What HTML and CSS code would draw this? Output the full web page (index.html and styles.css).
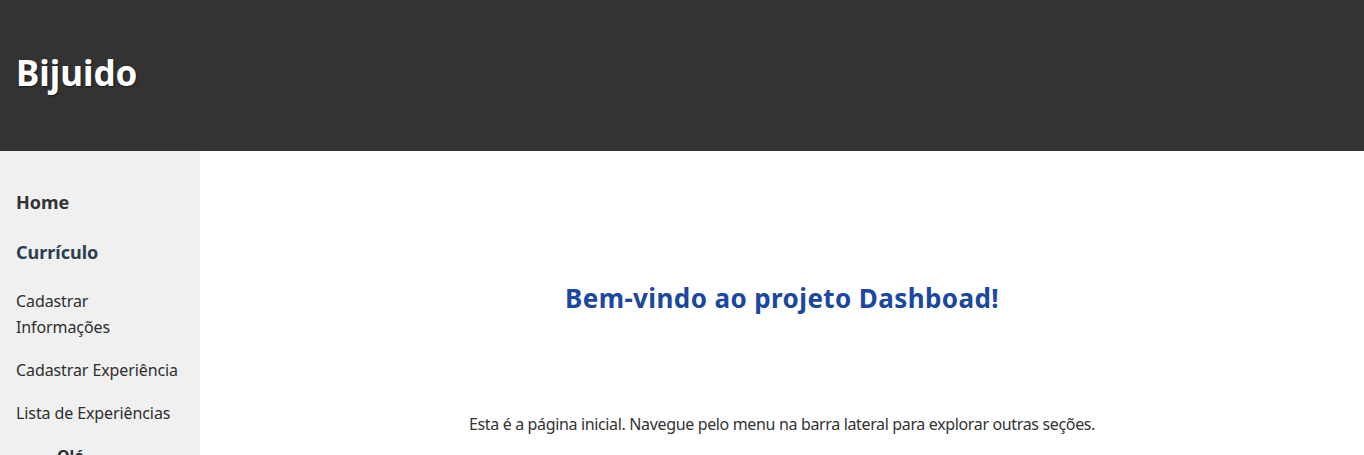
FILE: index.html
```html
<!DOCTYPE html>
<html lang="pt-BR">
<head>
<meta charset="utf-8">
<title>Bijuido</title>
<link rel="stylesheet" href="styles.css">
</head>
<body>
<header class="topbar">
  <h1 class="brand">Bijuido</h1>
</header>
<div class="layout">
  <nav class="sidebar">
    <a class="nav-head" href="#">Home</a>
    <a class="nav-head nav-section" href="#">Currículo</a>
    <a class="nav-link" href="#">Cadastrar<br>Informações</a>
    <a class="nav-link" href="#">Cadastrar Experiência</a>
    <a class="nav-link" href="#">Lista de Experiências</a>
    <a class="nav-link nav-sub" href="#">Olá</a>
  </nav>
  <main class="content">
    <h2 class="welcome">Bem-vindo ao projeto Dashboad!</h2>
    <p class="intro">Esta é a página inicial. Navegue pelo menu na barra lateral para explorar outras seções.</p>
  </main>
</div>
</body>
</html>
```
FILE: styles.css
```css
* { box-sizing: border-box; }
html, body { margin: 0; padding: 0; }
body {
  font-family: "Noto Sans", "Open Sans", sans-serif;
  color: #333;
  background: #fff;
  height: 455px;
  overflow: hidden;
}
.topbar {
  background: #333;
  height: 151px;
  display: flex;
  align-items: center;
  padding: 0 16px 6px;
}
.brand {
  margin: 0;
  color: #fff;
  font-size: 35px;
  font-weight: 700;
  letter-spacing: 0;
  text-shadow: 1px 1px 2px rgba(0,0,0,0.5);
}
.layout {
  display: flex;
  height: 304px;
}
.sidebar {
  width: 200px;
  flex: none;
  background: #f0f0f0;
  display: flex;
  flex-direction: column;
  gap: 17px;
  padding: 38px 16px 0;
}
.sidebar a { text-decoration: none; line-height: 26px; }
.nav-head {
  font-size: 18px;
  font-weight: 700;
  color: #333;
  margin-bottom: 7px;
}
.nav-section { color: #2c3e50; margin-bottom: 6px; }
.nav-link {
  font-size: 16px;
  color: #2e2e2e;
  letter-spacing: -0.1px;
}
.nav-sub { padding-left: 41px; font-weight: 700; }
.content {
  flex: 1;
  text-align: center;
  padding: 128px 20px 0;
}
.welcome {
  margin: 0;
  font-size: 26px;
  line-height: 38px;
  font-weight: 700;
  color: #1a47a0;
  letter-spacing: 0.4px;
}
.intro {
  margin: 95px 0 0;
  font-size: 16px;
  line-height: 24px;
  letter-spacing: -0.35px;
}
```
